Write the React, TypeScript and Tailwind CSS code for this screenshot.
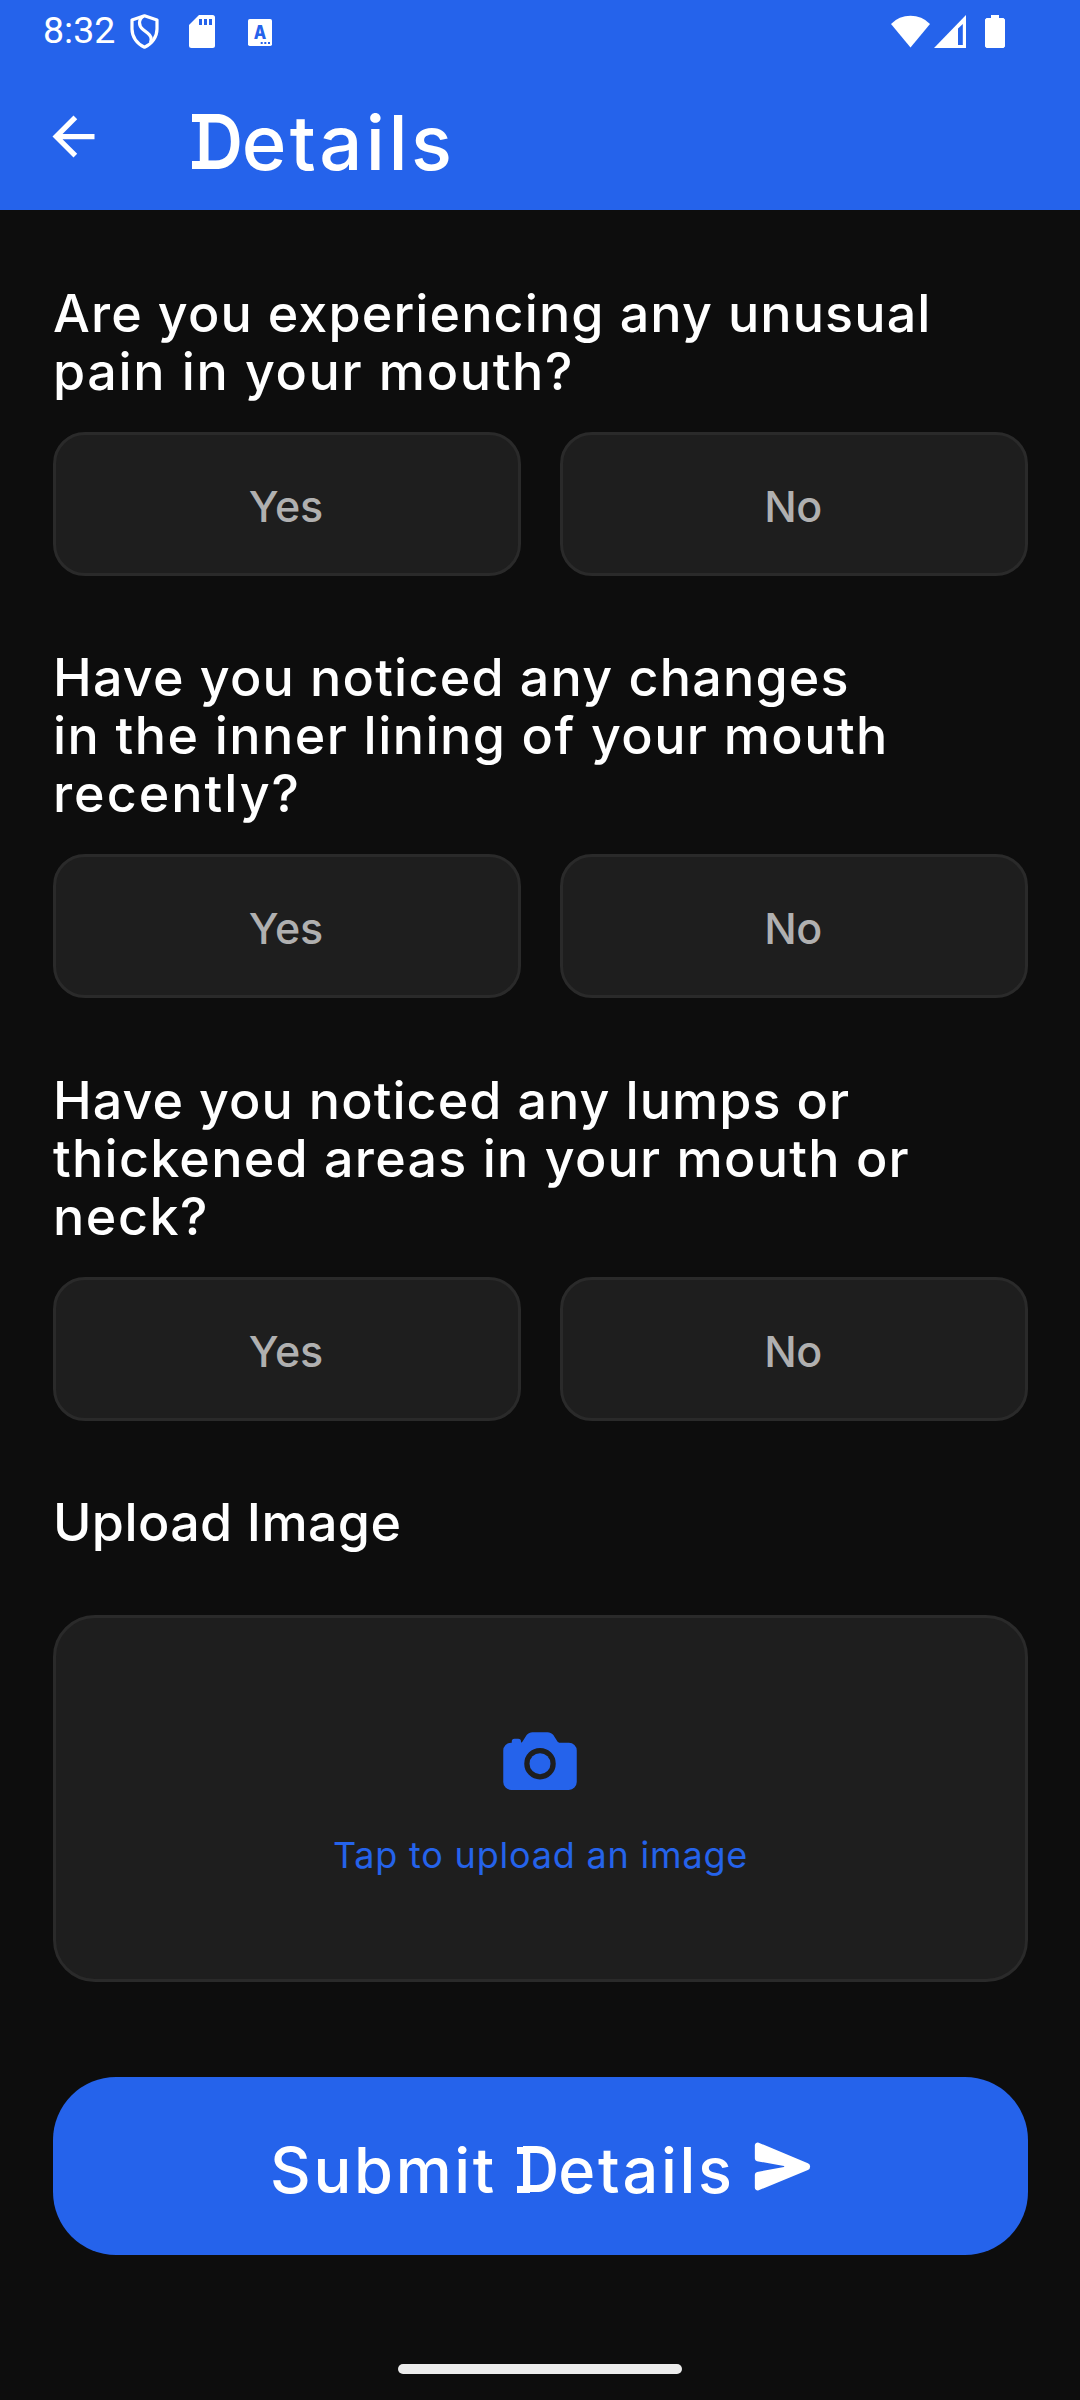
import { IoCamera, IoSend } from "react-icons/io5";

type Line = { text: string; tracking: string };

const questions: { lines: Line[]; spacing: string }[] = [
  {
    spacing: "mt-[75px]",
    lines: [
      { text: "Are you experiencing any unusual", tracking: "tracking-[1.12px]" },
      { text: "pain in your mouth?", tracking: "tracking-[1.66px]" },
    ],
  },
  {
    spacing: "mt-[73px]",
    lines: [
      { text: "Have you noticed any changes", tracking: "tracking-[1.21px]" },
      { text: "in the inner lining of your mouth", tracking: "tracking-[1.44px]" },
      { text: "recently?", tracking: "tracking-[1.99px]" },
    ],
  },
  {
    spacing: "mt-[74px]",
    lines: [
      { text: "Have you noticed any lumps or", tracking: "tracking-[1.07px]" },
      { text: "thickened areas in your mouth or", tracking: "tracking-[1.26px]" },
      { text: "neck?", tracking: "tracking-[1.54px]" },
    ],
  },
];

/* Capital D with short slab serifs on the outside of its stem. */
function SlabD() {
  return (
    <span className="relative inline-block h-[0.727em] w-[0.64em] leading-[0.727em] before:absolute before:top-0 before:-left-[0.015em] before:h-[0.105em] before:w-[0.2em] before:bg-white after:absolute after:bottom-0 after:-left-[0.015em] after:h-[0.105em] after:w-[0.2em] after:bg-white">
      <span className="ml-[0.02em] inline-block origin-left scale-x-[0.87] font-semibold">D</span>
    </span>
  );
}

function StatusBar() {
  return (
    <div className="flex h-[62px] items-center pr-[75px] pl-[43px] text-white">
      <span className="w-[87px] font-['Roboto'] text-[37.5px] leading-none">8:32</span>
      <svg className="h-[35px] w-[29px]" viewBox="0 0 29 35" fill="none" stroke="white" strokeWidth="3.2" strokeLinejoin="round">
        <path d="M14.5 1.8 L27 6 V15 C27 23 22 30 14.5 33.2 C7 30 2 23 2 15 V6 Z" />
        <path d="M13.5 2.2 C8 5.5 8.5 12 13 15.5 L17.500 19 C21.500 22 22 25 20.500 28.500" />
      </svg>
      <svg className="ml-[30px] h-[33px] w-[26px]" viewBox="0 0 26 33">
        <path d="M10 0 H23.500 Q26 0 26 2.500 V30.500 Q26 33 23.500 33 H2.500 Q0 33 0 30.500 V10 Z" fill="white" />
        <path d="M10 4h3v6h-3zM15 4h3v6h-3zM20 4h3v6h-3z" fill="#2563eb" />
      </svg>
      <svg className="mt-[2px] ml-[33px] h-[27px] w-6" viewBox="0 0 24 27">
        <rect width="24" height="27" rx="1.8" fill="white" />
        <text x="12" y="20.300" textAnchor="middle" fontFamily="Inter" fontWeight="800" fontSize="19" textLength="12.500" lengthAdjust="spacingAndGlyphs" fill="#2563eb">A</text>
        <path d="M12.700 23h2v2h-2zM16.300 23h2v2h-2zM20 23h2v2h-2z" fill="#2563eb" />
      </svg>
      <svg className="ml-auto h-[33px] w-[39px]" viewBox="0 0 39 33">
        <path d="M0 9 A27 27 0 0 1 39 9 L19.500 32.500 Z" fill="white" />
      </svg>
      <svg className="ml-1 h-[33px] w-8" viewBox="0 0 32 33">
        <path d="M0 33 L32 0 V33 Z" fill="white" />
        <path d="M24 13.500 L28.800 9 V30 H24 Z" fill="#2563eb" />
      </svg>
      <svg className="ml-[19px] h-[33px] w-5" viewBox="0 0 20 33">
        <path d="M6 0h8v3h4.500l1.500 1.500v27l-1.500 1.500h-17L0 31.500v-27L1.500 3H6z" fill="white" />
      </svg>
    </div>
  );
}

function Header() {
  return (
    <header className="h-[210px] shrink-0 bg-[#2563eb]">
      <StatusBar />
      <div className="flex h-[159px] items-center pl-[42px]">
        <button aria-label="Back" className="-mt-[10px]">
          <svg className="size-[63px]" viewBox="0 0 24 24" fill="white">
            <path d="M20 11H7.830l5.590-5.590L12 4l-8 8 8 8 1.410-1.410L7.830 13H20v-2z" />
          </svg>
        </button>
        <h1 className="ml-[88px] flex items-center text-[76px] leading-none font-medium text-white">
          <SlabD />
          <span className="tracking-[3.4px]">etails</span>
        </h1>
      </div>
    </header>
  );
}

function Choice({ label, tracking }: { label: string; tracking: string }) {
  return (
    <button className={`flex h-36 items-center justify-center rounded-[32px] border-[3px] border-[#2a2a2a] bg-[#1e1e1e] pt-1 pr-[2px] text-[43px] font-medium text-[#b0b0b0] ${tracking}`}>
      {label}
    </button>
  );
}

export default function App() {
  return (
    <div className="flex h-[2400px] w-[1080px] flex-col overflow-hidden bg-[#0d0d0d] font-['Inter',sans-serif] text-white">
      <Header />
      <main className="flex flex-col pr-[52px] pl-[53px]">
        {questions.map((q) => (
          <section key={q.lines[0].text} className={q.spacing}>
            <h2 className="text-[52px] leading-[58px] font-medium whitespace-nowrap">
              {q.lines.map((line) => (
                <span key={line.text} className={`block ${line.tracking}`}>
                  {line.text}
                </span>
              ))}
            </h2>
            <div className="mt-[31px] grid grid-cols-[468px_468px] gap-[39px]">
              <Choice label="Yes" tracking="tracking-[-0.07px]" />
              <Choice label="No" tracking="tracking-[-0.5px]" />
            </div>
          </section>
        ))}
        <h2 className="mt-[73px] text-[52px] leading-[58px] font-medium tracking-[0.38px]">Upload Image</h2>
        <button className="mt-[63px] flex h-[367px] flex-col items-center rounded-[42px] border-[3px] border-[#2a2a2a] bg-[#1e1e1e] pt-[101px] text-[#2563eb]">
          <IoCamera className="mr-px size-[84px]" />
          <span className="mt-7 text-[36px] leading-[48px] tracking-[0.8px]">Tap to upload an image</span>
        </button>
        <button className="mt-[95px] flex h-[178px] items-center rounded-[63px] bg-[#2563eb] pl-[217px] text-white">
          <span className="flex items-center pt-[8px] text-[63px] leading-none font-medium tracking-[2.7px]">
            <span className="w-[248px] text-left whitespace-pre">Submit </span>
            <SlabD />
            <span>etails</span>
          </span>
          <IoSend className="ml-[18px] size-[59px]" />
        </button>
      </main>
      <div className="mx-auto mt-auto mb-[26px] h-[10px] w-[284px] rounded-[5px] bg-[#ececec]" />
    </div>
  );
}
